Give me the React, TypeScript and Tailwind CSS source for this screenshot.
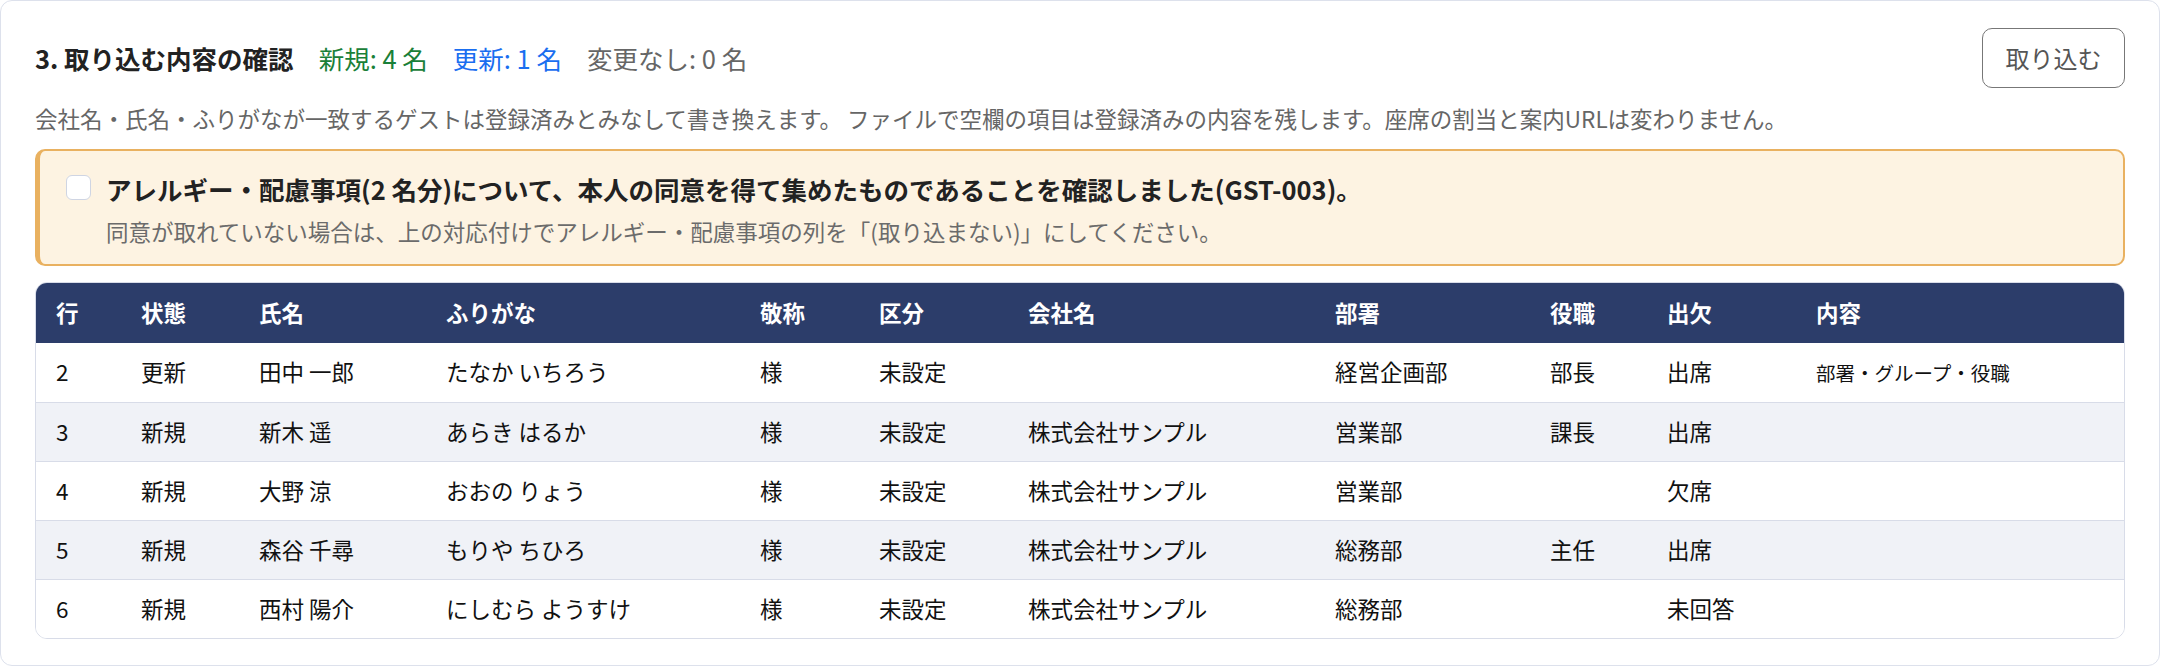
import React from 'react';

type Row = {
  line: number;
  status: string;
  name: string;
  kana: string;
  honorific: string;
  kind: string;
  company: string;
  dept: string;
  title: string;
  attendance: string;
  changes: string;
};

const ROWS: Row[] = [
  { line: 2, status: '更新', name: '田中 一郎', kana: 'たなか いちろう', honorific: '様', kind: '未設定', company: '', dept: '経営企画部', title: '部長', attendance: '出席', changes: '部署・グループ・役職' },
  { line: 3, status: '新規', name: '新木 遥', kana: 'あらき はるか', honorific: '様', kind: '未設定', company: '株式会社サンプル', dept: '営業部', title: '課長', attendance: '出席', changes: '' },
  { line: 4, status: '新規', name: '大野 涼', kana: 'おおの りょう', honorific: '様', kind: '未設定', company: '株式会社サンプル', dept: '営業部', title: '', attendance: '欠席', changes: '' },
  { line: 5, status: '新規', name: '森谷 千尋', kana: 'もりや ちひろ', honorific: '様', kind: '未設定', company: '株式会社サンプル', dept: '総務部', title: '主任', attendance: '出席', changes: '' },
  { line: 6, status: '新規', name: '西村 陽介', kana: 'にしむら ようすけ', honorific: '様', kind: '未設定', company: '株式会社サンプル', dept: '総務部', title: '', attendance: '未回答', changes: '' },
];

const HEADERS = ['行', '状態', '氏名', 'ふりがな', '敬称', '区分', '会社名', '部署', '役職', '出欠', '内容'];

export default function App() {
  return (
    <div className="bg-white font-['Noto_Sans_CJK_JP','Noto_Sans',sans-serif]">
      <div className="rounded-[12px] border border-[#dde1ec] bg-white px-[34px] pt-[27px] pb-[26px]">
        {/* heading */}
        <div className="flex h-[60px] items-center justify-between">
          <div className="flex items-baseline gap-[25px]">
            <h2 className="text-[25.5px] font-bold text-[#222]">3. 取り込む内容の確認</h2>
            <span className="text-[25.5px] text-[#1a8038]">新規: 4 名</span>
            <span className="text-[25.5px] text-[#1a6ef0]">更新: 1 名</span>
            <span className="text-[25.5px] text-[#666]">変更なし: 0 名</span>
          </div>
          <button
            type="button"
            className="h-[60px] w-[143px] rounded-[10px] border-[1.5px] border-[#777] bg-white text-[24px] text-[#555]"
          >
            取り込む
          </button>
        </div>

        <p className="mt-[15px] text-[22.5px] leading-[31px] text-[#666]">
          会社名・氏名・ふりがなが一致するゲストは登録済みとみなして書き換えます。 ファイルで空欄の項目は登録済みの内容を残します。座席の割当と案内URLは変わりません。
        </p>

        {/* consent notice */}
        <div className="mt-[15px] flex gap-[15px] rounded-[10px] border-2 border-l-[5px] border-[#e9b160] bg-[#fdf3e2] pt-[20px] pb-[17px] pl-[26px]">
          <input
            type="checkbox"
            className="mt-[4px] h-[25px] w-[25px] shrink-0 appearance-none rounded-[6px] border-[1.5px] border-[#cfd5e3] bg-white"
          />
          <div>
            <div className="text-[25.5px] font-bold leading-[36px] text-[#222]">
              アレルギー・配慮事項(2 名分)について、本人の同意を得て集めたものであることを確認しました(GST-003)。
            </div>
            <div className="mt-[8px] text-[22.5px] leading-[32px] text-[#6b6b6b]">
              同意が取れていない場合は、上の対応付けでアレルギー・配慮事項の列を「(取り込まない)」にしてください。
            </div>
          </div>
        </div>

        {/* preview table */}
        <div className="mt-[16px] overflow-hidden rounded-[12px] border border-[#d8dce8]">
          <table className="w-full table-fixed border-collapse text-left">
            <colgroup>
              <col className="w-[85px]" />
              <col className="w-[118px]" />
              <col className="w-[187px]" />
              <col className="w-[314px]" />
              <col className="w-[119px]" />
              <col className="w-[149px]" />
              <col className="w-[307px]" />
              <col className="w-[215px]" />
              <col className="w-[117px]" />
              <col className="w-[149px]" />
              <col />
            </colgroup>
            <thead>
              <tr className="bg-[#2c3d6a]">
                {HEADERS.map((h) => (
                  <th key={h} className="h-[60px] px-[20px] text-[22.5px] font-bold text-white">
                    {h}
                  </th>
                ))}
              </tr>
            </thead>
            <tbody>
              {ROWS.map((r, i) => (
                <tr
                  key={r.line}
                  className={`${i % 2 === 1 ? 'bg-[#f0f2f7]' : 'bg-white'} ${i < ROWS.length - 1 ? 'border-b border-[#d8dce8]' : ''}`}
                >
                  <td className="h-[59px] px-[20px] text-[22.5px] text-[#111]">{r.line}</td>
                  <td className="px-[20px] text-[22.5px] text-[#111]">{r.status}</td>
                  <td className="px-[20px] text-[22.5px] text-[#111]">{r.name}</td>
                  <td className="px-[20px] text-[22.5px] text-[#111]">{r.kana}</td>
                  <td className="px-[20px] text-[22.5px] text-[#111]">{r.honorific}</td>
                  <td className="px-[20px] text-[22.5px] text-[#111]">{r.kind}</td>
                  <td className="px-[20px] text-[22.5px] text-[#111]">{r.company}</td>
                  <td className="px-[20px] text-[22.5px] text-[#111]">{r.dept}</td>
                  <td className="px-[20px] text-[22.5px] text-[#111]">{r.title}</td>
                  <td className="px-[20px] text-[22.5px] text-[#111]">{r.attendance}</td>
                  <td className="px-[20px] text-[19.5px] text-[#111]">{r.changes}</td>
                </tr>
              ))}
            </tbody>
          </table>
        </div>
      </div>
    </div>
  );
}
